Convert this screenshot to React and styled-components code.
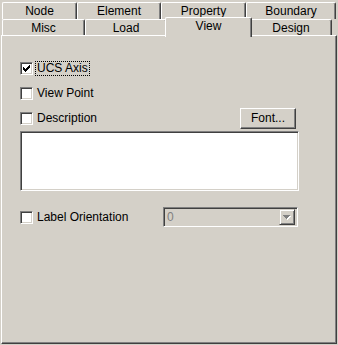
import React from "react";
import styled, { createGlobalStyle } from "styled-components";

const face = "#d4d0c8";
const shadow = "#808080";
const dark = "#404040";

const Global = createGlobalStyle`
  html, body {
    margin: 0;
    padding: 0;
    background: ${face};
  }
  body {
    font-family: "Liberation Sans", Arial, sans-serif;
    font-size: 12px;
    color: #000;
  }
`;

const Dialog = styled.div`
  width: 338px;
  height: 345px;
  padding: 2px 1px 0 1px;
  box-sizing: border-box;
  display: flex;
  flex-direction: column;
`;

const TabRow = styled.div`
  display: flex;
  height: ${({ $h }) => $h}px;
  padding-left: 1px;
  position: relative;
  z-index: ${({ $front }) => ($front ? 2 : 1)};
`;

const Tab = styled.div`
  box-sizing: border-box;
  width: ${({ $w }) => $w}px;
  height: ${({ $selected }) => ($selected ? "20px" : "100%")};
  margin: ${({ $selected }) => ($selected ? "-2px -2px 0 -2px" : "0")};
  border-left: 1px solid #fff;
  border-top: 1px solid #fff;
  border-right: 1px solid ${dark};
  border-top-left-radius: 2px;
  border-top-right-radius: 2px;
  box-shadow: inset -1px 0 0 ${shadow};
  background: ${face};
  display: flex;
  align-items: center;
  justify-content: center;
  padding-bottom: ${({ $selected }) => ($selected ? "4px" : "0")};
  position: relative;
  z-index: ${({ $selected }) => ($selected ? 3 : 1)};
  white-space: nowrap;
`;

const Panel = styled.div`
  flex: 1;
  box-sizing: border-box;
  border-left: 1px solid #fff;
  border-top: 1px solid #fff;
  border-right: 1px solid ${dark};
  border-bottom: 1px solid ${dark};
  box-shadow: inset -1px -1px 0 ${shadow};
  margin-bottom: 1px;
  padding: 25px 0 0 18px;
  display: flex;
  flex-direction: column;
`;

const CheckRow = styled.div`
  display: flex;
  align-items: center;
  height: ${({ $h }) => $h || 15}px;
  margin-top: ${({ $mt }) => $mt || 0}px;
  width: ${({ $w }) => ($w ? `${$w}px` : "auto")};
  justify-content: ${({ $between }) => ($between ? "space-between" : "flex-start")};
`;

const CheckGroup = styled.div`
  display: flex;
  align-items: center;
  width: ${({ $w }) => ($w ? `${$w}px` : "auto")};
`;

const Box = styled.div`
  width: 13px;
  height: 13px;
  box-sizing: border-box;
  border-top: 1px solid ${shadow};
  border-left: 1px solid ${shadow};
  border-right: 1px solid #fff;
  border-bottom: 1px solid #fff;
  box-shadow: inset 1px 1px 0 ${dark}, inset -1px -1px 0 ${face};
  background: #fff;
  display: flex;
  align-items: center;
  justify-content: center;
  flex-shrink: 0;
`;

const Label = styled.span`
  margin-left: 3px;
  padding: 0 1px;
  line-height: 13px;
  outline: ${({ $focus }) => ($focus ? "1px dotted #000" : "none")};
  outline-offset: 0;
`;

const Button = styled.div`
  width: 56px;
  height: 21px;
  box-sizing: border-box;
  border-top: 1px solid #fff;
  border-left: 1px solid #fff;
  border-right: 1px solid ${dark};
  border-bottom: 1px solid ${dark};
  box-shadow: inset -1px -1px 0 ${shadow};
  display: flex;
  align-items: center;
  justify-content: center;
  padding-bottom: 1px;
`;

const TextBox = styled.div`
  width: 279px;
  height: 60px;
  margin-top: 2px;
  box-sizing: border-box;
  border-top: 1px solid ${shadow};
  border-left: 1px solid ${shadow};
  border-right: 1px solid #fff;
  border-bottom: 1px solid #fff;
  box-shadow: inset 1px 1px 0 ${dark}, inset -1px -1px 0 ${face};
  background: #fff;
`;

const Combo = styled.div`
  width: 135px;
  height: 20px;
  box-sizing: border-box;
  border-top: 1px solid ${shadow};
  border-left: 1px solid ${shadow};
  border-right: 1px solid #fff;
  border-bottom: 1px solid #fff;
  box-shadow: inset 1px 1px 0 ${dark}, inset -1px -1px 0 ${face};
  background: ${face};
  display: flex;
  align-items: center;
  padding: 2px 2px 2px 3px;
  color: ${shadow};
`;

const ComboText = styled.span`
  flex: 1;
  line-height: 14px;
`;

const DropButton = styled.div`
  width: 16px;
  height: 16px;
  box-sizing: border-box;
  border-top: 1px solid ${face};
  border-left: 1px solid ${face};
  border-right: 1px solid ${dark};
  border-bottom: 1px solid ${dark};
  box-shadow: inset 1px 1px 0 #fff, inset -1px -1px 0 ${shadow};
  display: flex;
  align-items: center;
  justify-content: center;
`;

const checkRows = [
  [6, 1],
  [5, 2],
  [0, 1], [4, 3],
  [0, 2], [3, 3],
  [0, 5],
  [1, 3],
  [2, 1],
];
const checkY = [0, 1, 2, 2, 3, 3, 4, 5, 6];

function CheckMark() {
  return (
    <svg width="7" height="7" viewBox="0 0 7 7" shapeRendering="crispEdges">
      {checkRows.map(([x, w], i) => (
        <rect key={i} x={x} y={checkY[i]} width={w} height="1" fill="#000" />
      ))}
    </svg>
  );
}

function Arrow() {
  return (
    <svg width="8" height="5" viewBox="0 0 8 5" shapeRendering="crispEdges">
      <rect x="1" y="1" width="7" height="1" fill="#fff" />
      <rect x="2" y="2" width="5" height="1" fill="#fff" />
      <rect x="3" y="3" width="3" height="1" fill="#fff" />
      <rect x="4" y="4" width="1" height="1" fill="#fff" />
      <rect x="0" y="0" width="7" height="1" fill={shadow} />
      <rect x="1" y="1" width="5" height="1" fill={shadow} />
      <rect x="2" y="2" width="3" height="1" fill={shadow} />
      <rect x="3" y="3" width="1" height="1" fill={shadow} />
    </svg>
  );
}

function Check({ checked, label, focus }) {
  return (
    <>
      <Box>{checked && <CheckMark />}</Box>
      <Label $focus={focus}>{label}</Label>
    </>
  );
}

const backTabs = [
  ["Node", 75],
  ["Element", 84],
  ["Property", 85],
  ["Boundary", 90],
];
const frontTabs = [
  ["Misc", 83],
  ["Load", 82],
  ["View", 87, true],
  ["Design", 82],
];

export default function App() {
  return (
    <Dialog>
      <Global />
      <TabRow $h={17}>
        {backTabs.map(([name, w]) => (
          <Tab key={name} $w={w}>{name}</Tab>
        ))}
      </TabRow>
      <TabRow $h={16} $front>
        {frontTabs.map(([name, w, sel]) => (
          <Tab key={name} $w={w} $selected={sel}>{name}</Tab>
        ))}
      </TabRow>
      <Panel>
        <CheckRow>
          <Check checked label="UCS Axis" focus />
        </CheckRow>
        <CheckRow $mt={10}>
          <Check label="View Point" />
        </CheckRow>
        <CheckRow $mt={7} $h={21} $w={276} $between>
          <CheckGroup>
            <Check label="Description" />
          </CheckGroup>
          <Button>Font...</Button>
        </CheckRow>
        <TextBox />
        <CheckRow $mt={16} $h={20}>
          <CheckGroup $w={143}>
            <Check label="Label Orientation" />
          </CheckGroup>
          <Combo>
            <ComboText>0</ComboText>
            <DropButton>
              <Arrow />
            </DropButton>
          </Combo>
        </CheckRow>
      </Panel>
    </Dialog>
  );
}
